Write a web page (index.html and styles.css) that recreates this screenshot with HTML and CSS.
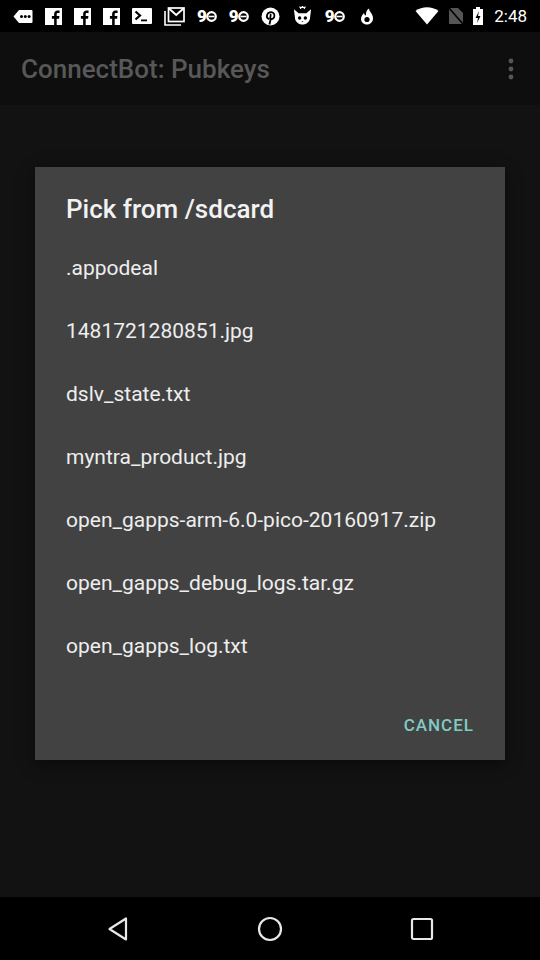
FILE: index.html
```html
<!DOCTYPE html>
<html>
<head>
<meta charset="utf-8">
<link rel="stylesheet" href="styles.css">
</head>
<body>
<div class="screen">
  <div class="statusbar">
    <div class="notifs">
      <svg class="ic" width="20" height="15" viewBox="0 0 20 15"><path d="M6 1h12.5a1 1 0 0 1 1 1v11a1 1 0 0 1-1 1H6L0.5 7.5z" fill="#fff"/><circle cx="8.5" cy="7.5" r="1.5" fill="#000"/><circle cx="12.3" cy="7.5" r="1.5" fill="#000"/><circle cx="16.1" cy="7.5" r="1.5" fill="#000"/></svg>
      <svg class="ic" width="17" height="17" viewBox="0 0 16 16"><rect width="16" height="16" fill="#fff"/><path d="M11 16V10h2.2l.4-2.5H11V6c0-.8.3-1.3 1.4-1.3h1.3V2.4c-.3 0-1-.1-1.9-.1C9.9 2.3 8.6 3.4 8.6 5.6v1.9H6.5V10h2.1v6z" fill="#000"/></svg>
      <svg class="ic" width="17" height="17" viewBox="0 0 16 16"><rect width="16" height="16" fill="#fff"/><path d="M11 16V10h2.2l.4-2.5H11V6c0-.8.3-1.3 1.4-1.3h1.3V2.4c-.3 0-1-.1-1.9-.1C9.9 2.3 8.6 3.4 8.6 5.6v1.9H6.5V10h2.1v6z" fill="#000"/></svg>
      <svg class="ic" width="17" height="17" viewBox="0 0 16 16"><rect width="16" height="16" fill="#fff"/><path d="M11 16V10h2.2l.4-2.5H11V6c0-.8.3-1.3 1.4-1.3h1.3V2.4c-.3 0-1-.1-1.9-.1C9.9 2.3 8.6 3.4 8.6 5.6v1.9H6.5V10h2.1v6z" fill="#000"/></svg>
      <svg class="ic" width="20" height="16" viewBox="0 0 20 16"><rect width="20" height="16" rx="1" fill="#fff"/><path d="M3.5 3.5l4.5 4-4.5 4" stroke="#000" stroke-width="2.2" fill="none"/><rect x="9" y="11.5" width="6" height="1.8" fill="#000"/></svg>
      <svg class="ic" width="21" height="19" viewBox="0 0 21 19"><path d="M1 4v14h16" stroke="#fff" stroke-width="1.6" fill="none"/><rect x="4.5" y="1" width="15.5" height="13.5" fill="none" stroke="#fff" stroke-width="1.7"/><path d="M5 1.5l7.2 6.5 7.3-6.5" stroke="#fff" stroke-width="1.9" fill="none"/></svg>
      <span class="nn">9<svg width="11" height="11" viewBox="0 0 11 11"><circle cx="5.5" cy="5.5" r="4.3" fill="none" stroke="#fff" stroke-width="2.2"/><rect x="2.5" y="4.7" width="6" height="1.6" fill="#fff"/></svg></span>
      <span class="nn">9<svg width="11" height="11" viewBox="0 0 11 11"><circle cx="5.5" cy="5.5" r="4.3" fill="none" stroke="#fff" stroke-width="2.2"/><rect x="2.5" y="4.7" width="6" height="1.6" fill="#fff"/></svg></span>
      <svg class="ic" width="19" height="19" viewBox="0 0 18 18"><circle cx="9" cy="9" r="8.5" fill="#fff"/><path d="M8 16.5l1.4-6" stroke="#000" stroke-width="1.8"/><path d="M7.2 11.2C5.6 10.5 5.3 8.8 5.8 7.3 6.6 5 9.6 4.3 11.4 5.5c1.8 1.2 1.6 4.3 0 5.4-1.1.8-2.4.5-2.6-.4-.2-.9.6-2.4.3-3.3" stroke="#000" stroke-width="1.7" fill="none" stroke-linecap="round"/></svg>
      <svg class="ic" width="21" height="20" viewBox="0 0 22 20"><path d="M2 3l5 4h8l5-4-1 8c0 5-4 8-8 8s-8-3-8-8z" fill="#fff"/><path d="M8 0l1 2 2-2 2 2 1-2" stroke="#fff" stroke-width="1.2" fill="none"/><circle cx="8" cy="12" r="1.8" fill="#000"/><circle cx="14" cy="12" r="1.8" fill="#000"/><path d="M10 15.5h2l-1 1z" fill="#000"/></svg>
      <span class="nn">9<svg width="11" height="11" viewBox="0 0 11 11"><circle cx="5.5" cy="5.5" r="4.3" fill="none" stroke="#fff" stroke-width="2.2"/><rect x="2.5" y="4.7" width="6" height="1.6" fill="#fff"/></svg></span>
      <svg class="ic fire" width="14" height="17" viewBox="0 0 14 17"><path d="M7 16.5c-3.5 0-6-2.5-6-5.5 0-2.5 1.5-4.5 3-6 .2 1.5 1 2.5 2 2.5C6 5 6 2.5 9 .5c0 3 4 5 4 10 0 3.3-2.7 6-6 6z" fill="#fff"/><circle cx="7" cy="11.5" r="2.6" fill="#000"/></svg>
    </div>
    <div class="sys">
      <svg class="ic" width="24" height="18" viewBox="0 0 24 18"><path d="M12 17.5L0.5 4C7 -1 17 -1 23.5 4z" fill="#fff"/></svg>
      <svg class="ic" width="16" height="18" viewBox="0 0 16 18"><path d="M1 1h9l5 5v11H1z" fill="#555"/><path d="M1 1l14 16" stroke="#000" stroke-width="1.6"/></svg>
      <svg class="ic" width="10" height="18" viewBox="0 0 10 18"><rect x="3" y="0" width="4" height="2" fill="#fff"/><rect x="0" y="2" width="10" height="16" fill="#fff"/><path d="M6 4L2.5 11H5l-1 5 3.5-7H5z" fill="#000"/></svg>
      <span class="time">2:48</span>
    </div>
  </div>
  <div class="appbar">
    <span class="apptitle">ConnectBot: Pubkeys</span>
    <svg class="more" width="6" height="22" viewBox="0 0 6 22"><circle cx="3" cy="3" r="2.4"/><circle cx="3" cy="11" r="2.4"/><circle cx="3" cy="19" r="2.4"/></svg>
  </div>
  <div class="content">
    <div class="dialog">
      <div class="dtitle">Pick from /sdcard</div>
      <ul class="list">
        <li>.appodeal</li>
        <li>1481721280851.jpg</li>
        <li>dslv_state.txt</li>
        <li>myntra_product.jpg</li>
        <li>open_gapps-arm-6.0-pico-20160917.zip</li>
        <li>open_gapps_debug_logs.tar.gz</li>
        <li>open_gapps_log.txt</li>
      </ul>
      <div class="actions">
        <span class="btn">CANCEL</span>
      </div>
    </div>
  </div>
  <div class="navbar">
    <svg width="22" height="26" viewBox="0 0 22 26"><path d="M19 2.5v21L2.5 13z" fill="none" stroke="#e8e8e8" stroke-width="2.2" stroke-linejoin="round"/></svg>
    <svg width="26" height="26" viewBox="0 0 26 26"><circle cx="13" cy="13" r="11" fill="none" stroke="#e8e8e8" stroke-width="2.2"/></svg>
    <svg width="24" height="24" viewBox="0 0 24 24"><rect x="2" y="2" width="20" height="20" rx="1.5" fill="none" stroke="#e8e8e8" stroke-width="2.2"/></svg>
  </div>
</div>
</body>
</html>
```
FILE: styles.css
```css
* { box-sizing: border-box; }
html, body { margin: 0; padding: 0; }
body {
  width: 540px;
  height: 960px;
  background: #121212;
  font-family: Roboto, "Noto Sans", sans-serif;
  overflow: hidden;
}
.screen {
  width: 540px;
  height: 960px;
  display: flex;
  flex-direction: column;
}
.statusbar {
  height: 32px;
  background: #000;
  display: flex;
  align-items: center;
  justify-content: space-between;
  padding: 0 13px 0 13px;
}
.notifs {
  display: flex;
  align-items: center;
  gap: 12px;
}
.sys {
  display: flex;
  align-items: center;
  gap: 9px;
}
.ic { display: block; }
.fire { margin-left: 3px; }
.nn {
  display: flex;
  align-items: center;
  color: #fff;
  font-weight: 900;
  font-size: 17px;
  line-height: 18px;
  gap: 0;
}
.nn svg { display: block; margin-left: -1px; }
.time {
  color: #fff;
  font-size: 17px;
  margin-left: 2px;
}
.appbar {
  height: 73px;
  background: #0e0e0e;
  display: flex;
  align-items: center;
  justify-content: space-between;
  padding: 0 26px 0 21px;
}
.apptitle {
  color: #585858;
  font-size: 26px;
  font-weight: 500;
}
.more { fill: #555; display: block; }
.content {
  flex: 1;
  background: #121212;
  padding: 62px 35px 0 35px;
}
.dialog {
  background: #424242;
  width: 470px;
  height: 593px;
  box-shadow: 0 4px 14px rgba(0,0,0,0.5);
  display: flex;
  flex-direction: column;
}
.dtitle {
  color: #f2f2f2;
  font-size: 26px;
  font-weight: 500;
  line-height: 32px;
  padding: 26px 31px 0 31px;
}
.list {
  list-style: none;
  margin: 12px 0 0 0;
  padding: 0;
}
.list li {
  height: 63px;
  line-height: 63px;
  padding: 0 31px;
  color: #eeeeee;
  font-size: 21px;
}
.actions {
  display: flex;
  justify-content: flex-end;
  padding: 23px 31px 0 0;
}
.btn {
  color: #80cbc4;
  font-size: 17px;
  font-weight: 500;
  letter-spacing: 1px;
  line-height: 48px;
}
.navbar {
  height: 63px;
  background: #000;
  display: flex;
  align-items: center;
  justify-content: space-between;
  padding: 0 106px 0 107px;
}
.navbar svg { display: block; }
```
